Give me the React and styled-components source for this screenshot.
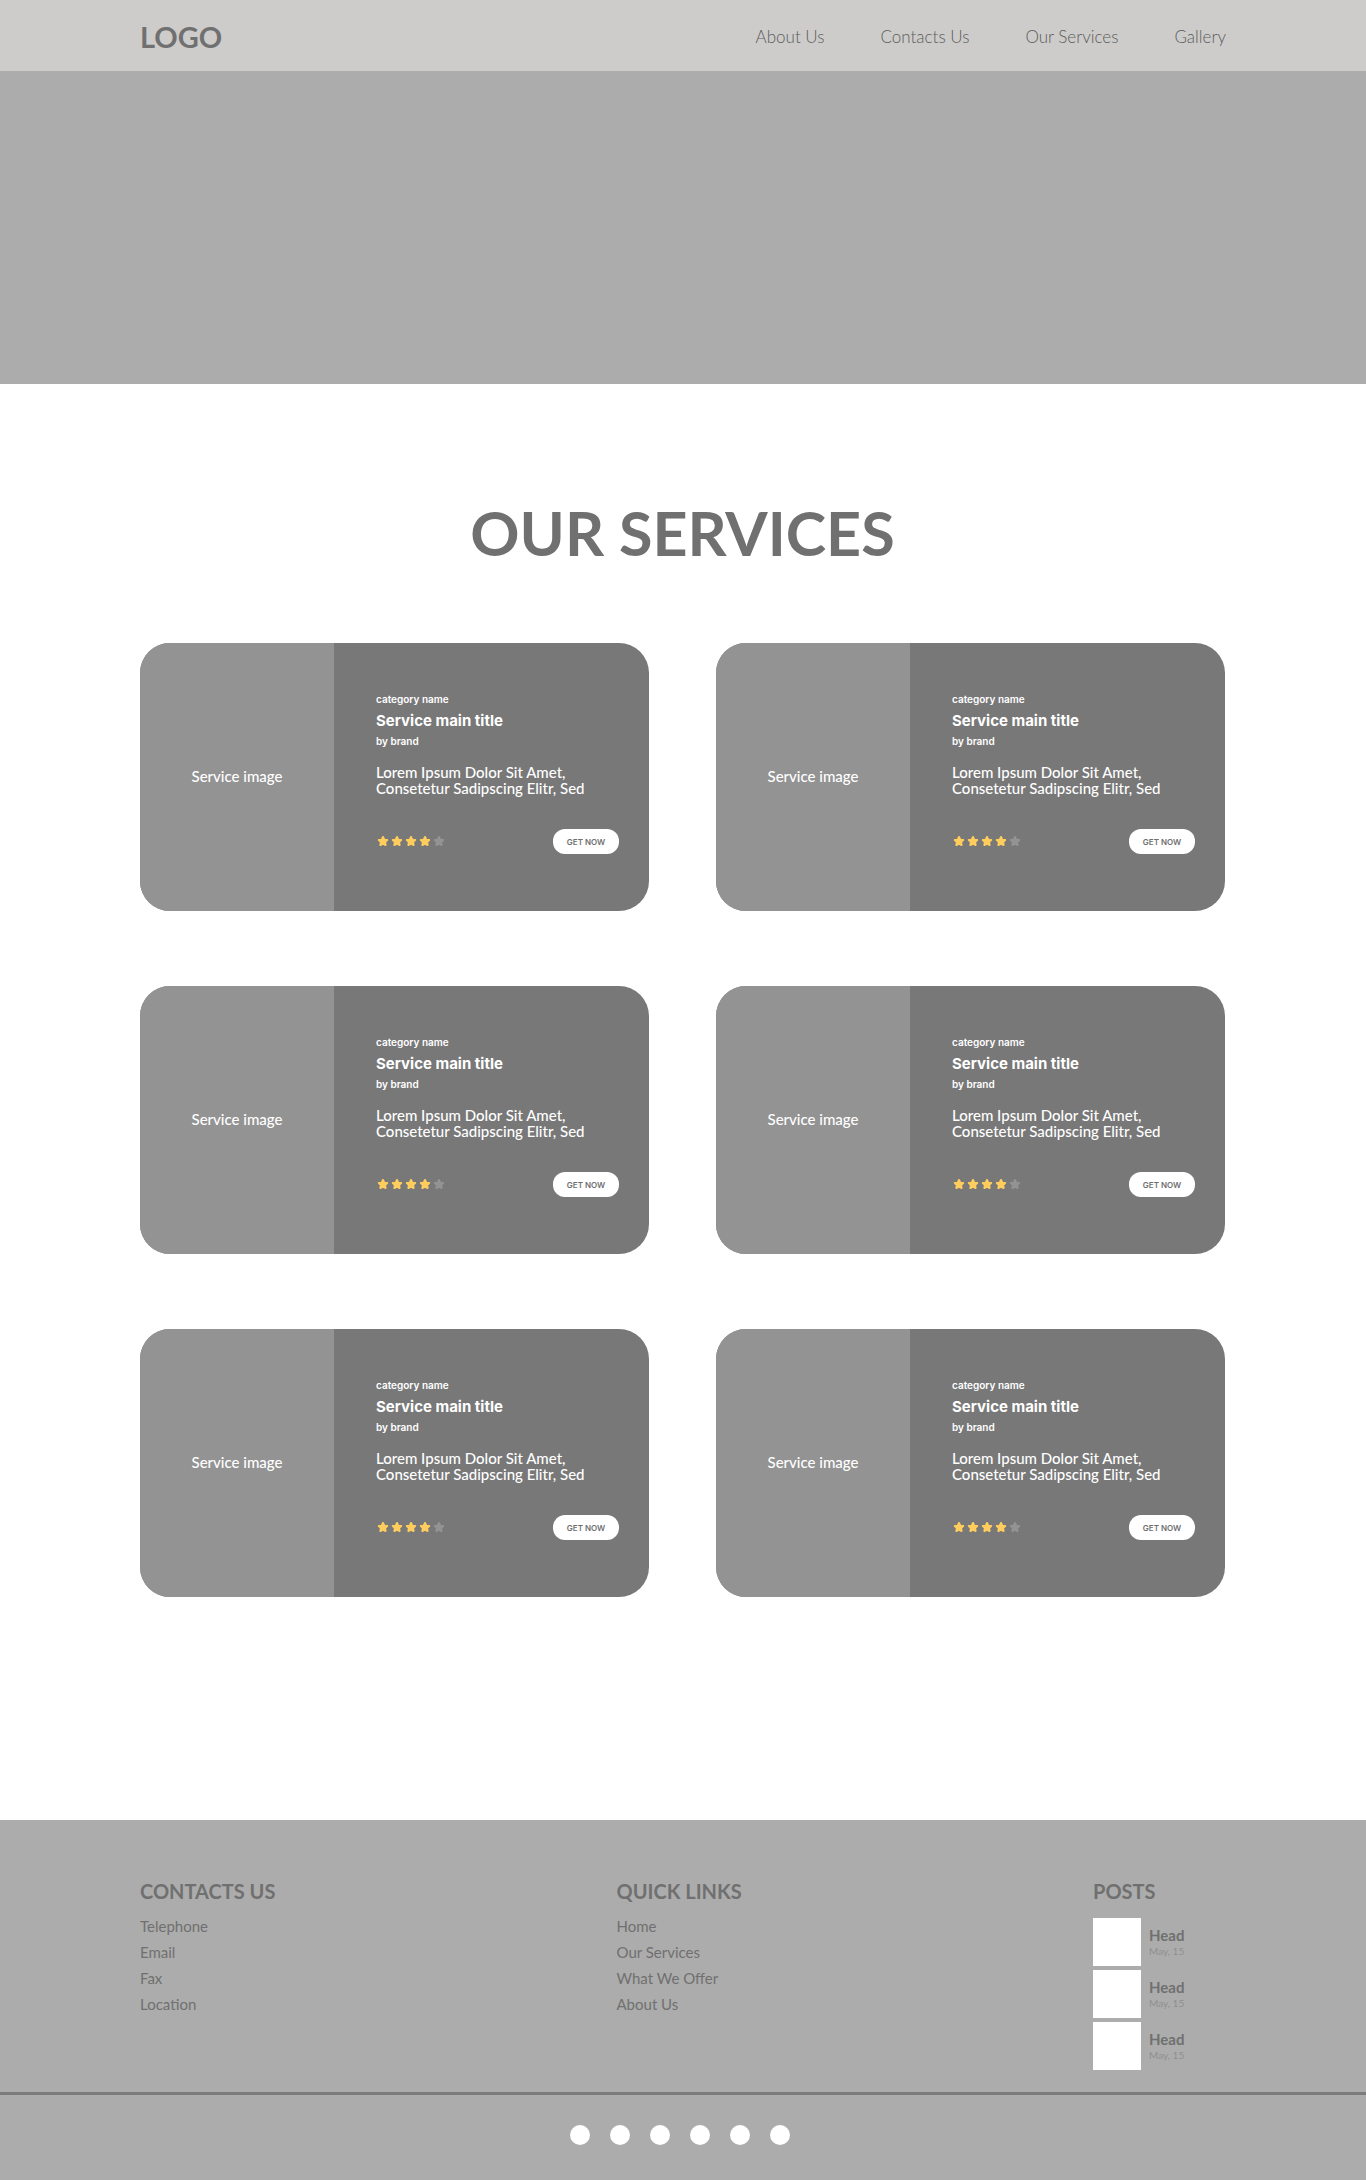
import React from "react";
import styled, { createGlobalStyle } from "styled-components";

const text = `Lato, "Open Sans", sans-serif`;
const display = `Inter, "Open Sans", sans-serif`;
const ink = "#707070";

const GlobalStyle = createGlobalStyle`
  *, *::before, *::after { box-sizing: border-box; }
  body { margin: 0; background: #fff; color: ${ink}; font-family: ${text}; }
  h1, h2, h3, p, ul { margin: 0; padding: 0; }
  ul { list-style: none; }
  a { color: inherit; text-decoration: none; }
`;

const Header = styled.header`
  display: flex;
  align-items: center;
  justify-content: space-between;
  height: 71px;
  padding: 3px 140px 0;
  background: #cdccca;
`;

const Logo = styled.a`
  font-size: 29px;
  line-height: 36px;
  font-weight: 700;
`;

const Nav = styled.nav`
  display: flex;
  gap: 56px;
  color: #5c5c5c;
  font-size: 17px;
  line-height: 20px;
  font-weight: 300;
`;

const Hero = styled.section`
  height: 313px;
  background: #acacac;
`;

const Services = styled.main`
  padding: 111px 141px 223px 140px;
`;

const Title = styled.h1`
  margin-bottom: 72px;
  font-size: 61px;
  line-height: 76px;
  font-weight: 700;
  text-align: center;
`;

const CardGrid = styled.div`
  display: grid;
  grid-template-columns: 1fr 1fr;
  gap: 75px 67px;
`;

const Card = styled.article`
  display: flex;
  height: 268px;
  border-radius: 30px;
  overflow: hidden;
  background: #787878;
  color: #fff;
`;

const CardImage = styled.div`
  display: flex;
  flex: 0 0 194px;
  align-items: center;
  justify-content: center;
  padding-bottom: 2px;
  background: #939393;
  font-size: 15px;
  line-height: 16px;
  font-weight: 500;
`;

const CardBody = styled.div`
  flex: 1;
  padding: 50px 30px 0 42px;
`;

const Small = styled.p`
  font-family: ${display};
  font-size: 10px;
  line-height: 12px;
  font-weight: 600;
`;

const CardTitle = styled.h2`
  margin: 7px 0 5px;
  font-family: ${display};
  font-size: 15px;
  line-height: 18px;
  font-weight: 700;
`;

const Description = styled.p`
  max-width: 220px;
  margin: 17px 0 33px;
  font-size: 15px;
  line-height: 16px;
  font-weight: 500;
`;

const CardActions = styled.div`
  display: flex;
  align-items: center;
  justify-content: space-between;
`;

const Stars = styled.div`
  display: flex;
  gap: 2px;
  padding: 0 0 2px 1px;
`;

const StarIcon = styled.svg`
  width: 12px;
  height: 12px;
  fill: currentColor;
  stroke: currentColor;
  color: ${({ $on }) => ($on ? "#ffcd5d" : "#939393")};
`;

const GetButton = styled.button`
  width: 66px;
  height: 25px;
  padding: 0;
  border: 0;
  border-radius: 12px;
  background: #fff;
  color: ${ink};
  font-family: ${display};
  font-size: 8px;
  line-height: 10px;
  font-weight: 600;
  cursor: pointer;
`;

const Footer = styled.footer`
  background: #acacac;
`;

const FooterColumns = styled.div`
  display: grid;
  grid-template-columns: 1fr 1fr 133px;
  padding: 58px 140px 22px;
`;

const FooterHeading = styled.h2`
  margin-bottom: 14px;
  font-size: 20px;
  line-height: 26px;
  font-weight: 700;
`;

const LinkList = styled.ul`
  margin-top: -5px;
  font-size: 15px;
  line-height: 26px;
`;

const Posts = styled.ul`
  display: grid;
  gap: 4px;
`;

const Post = styled.li`
  display: flex;
  align-items: center;
  gap: 8px;
`;

const Thumb = styled.div`
  width: 48px;
  height: 48px;
  background: #fff;
`;

const PostTitle = styled.h3`
  margin-bottom: 2px;
  font-size: 15px;
  line-height: 16px;
  font-weight: 700;
`;

const PostDate = styled.p`
  font-size: 10px;
  line-height: 12px;
  color: #8f8f8f;
`;

const Socials = styled.ul`
  display: flex;
  justify-content: center;
  gap: 20px;
  padding: 30px 6px 35px 0;
  border-top: 3px solid #7c7c7c;
`;

const SocialLink = styled.a`
  display: block;
  width: 20px;
  height: 20px;
  border-radius: 50%;
  background: #fff;
`;

function Star({ on }) {
  return (
    <StarIcon $on={on} viewBox="0 0 24 24" strokeWidth="4" strokeLinejoin="round" aria-hidden="true">
      <path d="M12 4l2.500 5.300 5.900.8-4.300 4 1.100 5.900L12 17.200l-5.200 2.800 1.100-5.900-4.300-4 5.900-.8z" />
    </StarIcon>
  );
}

function ServiceCard({ rating }) {
  return (
    <Card>
      <CardImage>Service image</CardImage>
      <CardBody>
        <Small>category name</Small>
        <CardTitle>Service main title</CardTitle>
        <Small>by brand</Small>
        <Description>Lorem Ipsum Dolor Sit Amet, Consetetur Sadipscing Elitr, Sed</Description>
        <CardActions>
          <Stars role="img" aria-label={`${rating} out of 5`}>
            {[1, 2, 3, 4, 5].map((n) => (
              <Star key={n} on={n <= rating} />
            ))}
          </Stars>
          <GetButton type="button">GET NOW</GetButton>
        </CardActions>
      </CardBody>
    </Card>
  );
}

function FooterLinks({ heading, items }) {
  return (
    <section>
      <FooterHeading>{heading}</FooterHeading>
      <LinkList>
        {items.map((item) => (
          <li key={item}>
            <a href="#">{item}</a>
          </li>
        ))}
      </LinkList>
    </section>
  );
}

const ratings = [4, 4, 4, 4, 4, 4];
const socials = ["Facebook", "Twitter", "Instagram", "LinkedIn", "YouTube", "Pinterest"];

export default function App() {
  return (
    <>
      <GlobalStyle />
      <Header>
        <Logo href="#">LOGO</Logo>
        <Nav>
          {["About Us", "Contacts Us", "Our Services", "Gallery"].map((item) => (
            <a key={item} href="#">{item}</a>
          ))}
        </Nav>
      </Header>
      <Hero />
      <Services>
        <Title>OUR SERVICES</Title>
        <CardGrid>
          {ratings.map((rating, i) => (
            <ServiceCard key={i} rating={rating} />
          ))}
        </CardGrid>
      </Services>
      <Footer>
        <FooterColumns>
          <FooterLinks heading="CONTACTS US" items={["Telephone", "Email", "Fax", "Location"]} />
          <FooterLinks heading="QUICK LINKS" items={["Home", "Our Services", "What We Offer", "About Us"]} />
          <section>
            <FooterHeading>POSTS</FooterHeading>
            <Posts>
              {[1, 2, 3].map((n) => (
                <Post key={n}>
                  <Thumb />
                  <div>
                    <PostTitle>Head</PostTitle>
                    <PostDate>May, 15</PostDate>
                  </div>
                </Post>
              ))}
            </Posts>
          </section>
        </FooterColumns>
        <Socials>
          {socials.map((name) => (
            <li key={name}>
              <SocialLink href="#" aria-label={name} />
            </li>
          ))}
        </Socials>
      </Footer>
    </>
  );
}
